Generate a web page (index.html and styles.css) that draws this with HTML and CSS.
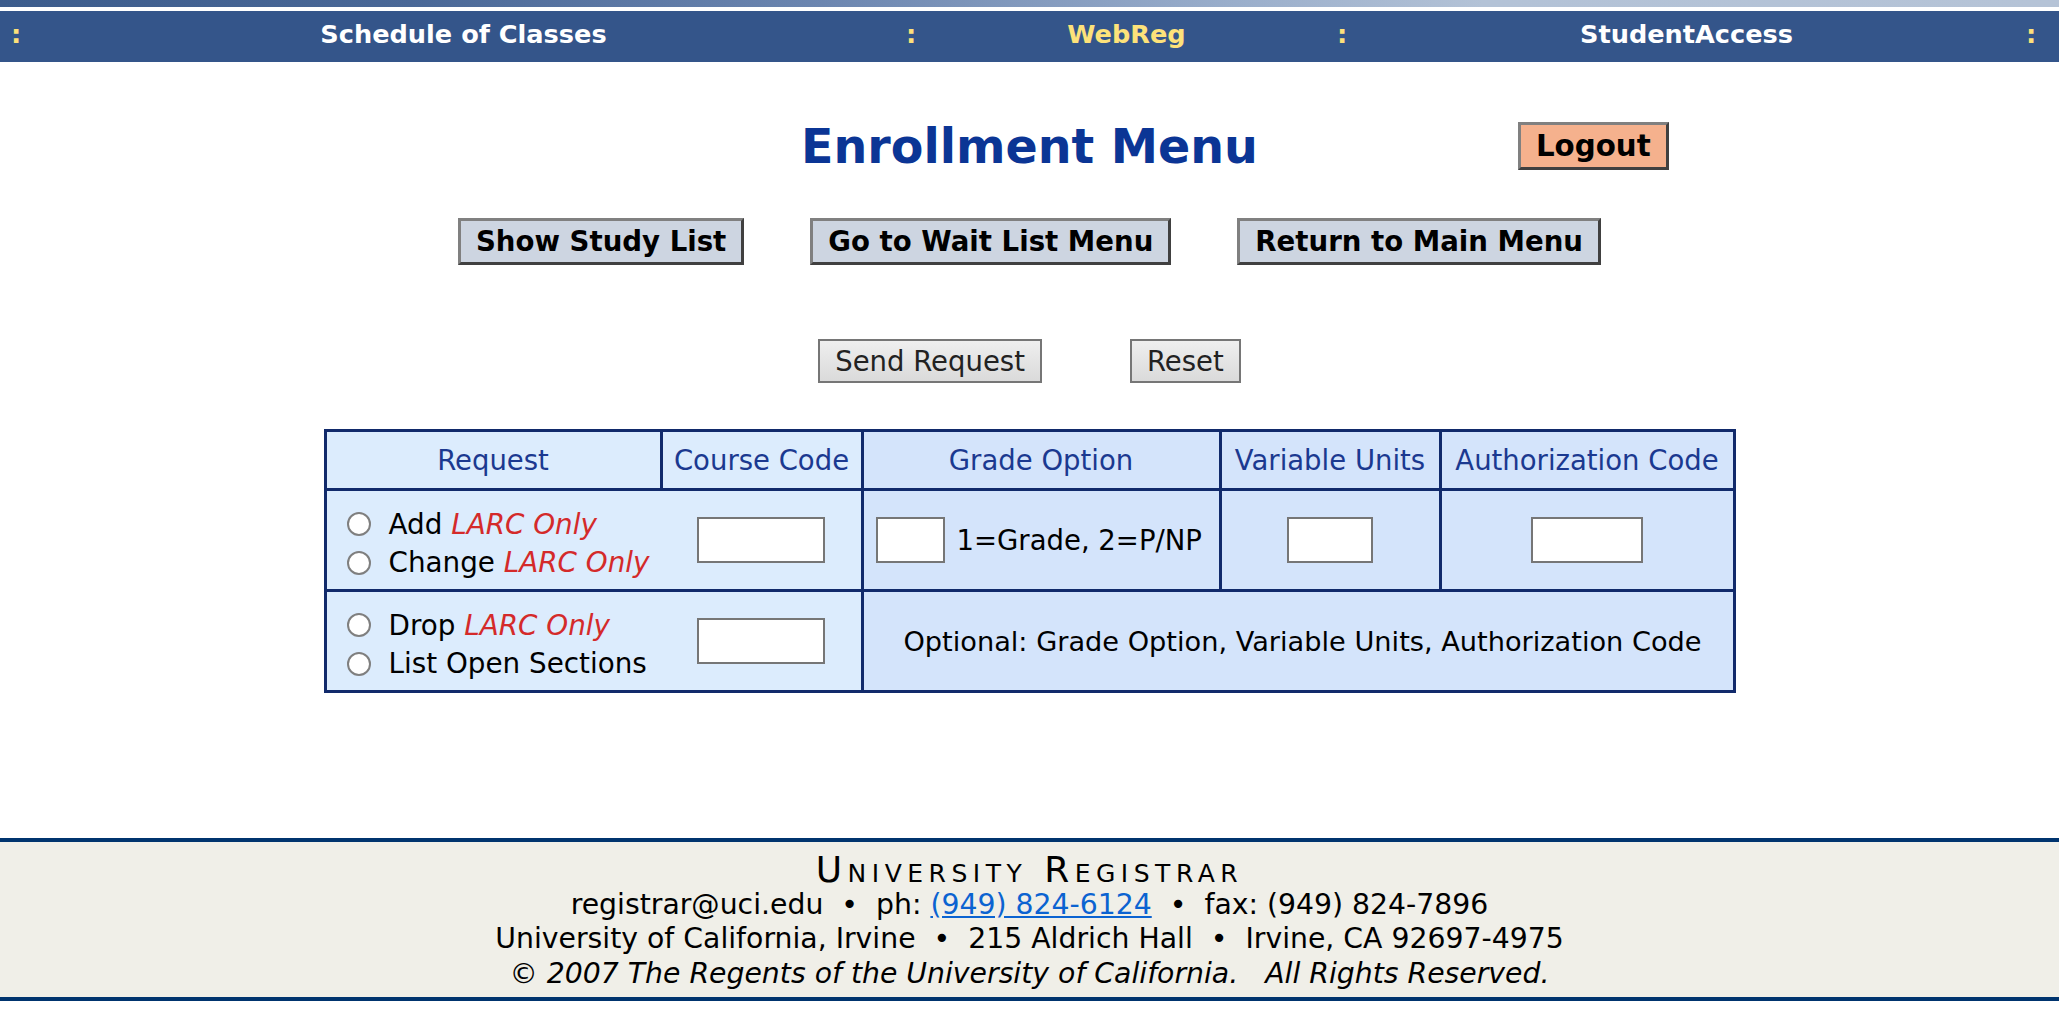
FILE: index.html
```html
<!DOCTYPE html>
<html lang="en">
<head>
<meta charset="utf-8">
<title>Enrollment Menu</title>
<link rel="stylesheet" href="styles.css">
</head>
<body>
<div class="banner"></div>
<nav class="nav">
  <span class="sep">:</span>
  <a class="nav-link" href="#">Schedule of Classes</a>
  <span class="sep">:</span>
  <a class="nav-link current" href="#">WebReg</a>
  <span class="sep">:</span>
  <a class="nav-link" href="#">StudentAccess</a>
  <span class="sep">:</span>
</nav>

<main class="main">
  <div class="title-row">
    <div></div>
    <h1 class="title">Enrollment Menu</h1>
    <div class="logout-cell"><button class="btn-bold btn-logout" type="button">Logout</button></div>
  </div>

  <div class="menu-buttons">
    <button class="btn-bold" type="button">Show Study List</button>
    <button class="btn-bold" type="button">Go to Wait List Menu</button>
    <button class="btn-bold" type="button">Return to Main Menu</button>
  </div>

  <div class="form-buttons">
    <button class="btn-plain" type="button">Send Request</button>
    <button class="btn-plain" type="button">Reset</button>
  </div>

  <table class="enroll">
    <colgroup>
      <col class="c-req"><col class="c-code"><col class="c-grade"><col class="c-units"><col class="c-auth">
    </colgroup>
    <thead>
      <tr>
        <th class="light">Request</th>
        <th class="light">Course Code</th>
        <th>Grade Option</th>
        <th>Variable Units</th>
        <th>Authorization Code</th>
      </tr>
    </thead>
    <tbody>
      <tr class="row">
        <td class="light req">
          <label class="opt"><input class="radio" type="radio" name="req"><span>Add <em class="larc">LARC Only</em></span></label>
          <label class="opt"><input class="radio" type="radio" name="req"><span>Change <em class="larc">LARC Only</em></span></label>
        </td>
        <td class="light code"><input class="field f-code" type="text"></td>
        <td class="grade"><div class="grade-inner"><input class="field f-grade" type="text"><span>1=Grade, 2=P/NP</span></div></td>
        <td class="center"><input class="field f-units" type="text"></td>
        <td class="center"><input class="field f-auth" type="text"></td>
      </tr>
      <tr class="row">
        <td class="light req">
          <label class="opt"><input class="radio" type="radio" name="req"><span>Drop <em class="larc">LARC Only</em></span></label>
          <label class="opt"><input class="radio" type="radio" name="req"><span>List Open Sections</span></label>
        </td>
        <td class="light code"><input class="field f-code" type="text"></td>
        <td class="center optional" colspan="3">Optional: Grade Option, Variable Units, Authorization Code</td>
      </tr>
    </tbody>
  </table>
</main>

<footer class="footer">
  <div class="f-title">University Registrar</div>
  <div>registrar@uci.edu &nbsp;•&nbsp; ph: <a class="f-link" href="#">(949) 824-6124</a> &nbsp;•&nbsp; fax: (949) 824-7896</div>
  <div>University of California, Irvine &nbsp;•&nbsp; 215 Aldrich Hall &nbsp;•&nbsp; Irvine, CA 92697-4975</div>
  <div class="f-copy">© 2007 The Regents of the University of California. &nbsp; All Rights Reserved.</div>
</footer>
</body>
</html>
```

FILE: styles.css
```css
html, body {
  margin: 0;
  padding: 0;
  background: #ffffff;
}
body {
  font-family: "DejaVu Sans", Verdana, sans-serif;
  font-size: 27.5px;
  color: #000;
}

.banner {
  height: 7px;
  background: linear-gradient(to right, #3c5c8c 0%, #4a6897 20%, #6c86b0 40%, #9aaecb 60%, #b3c2d6 72%, #b5c3d6 100%);
}
.nav {
  margin-top: 4px;
  height: 51px;
  box-sizing: border-box;
  padding-bottom: 5px;
  background: #34558a;
  display: grid;
  grid-template-columns: 32px 863fr 32px 399fr 32px 657fr 32px;
  padding-right: 12px;
  align-items: center;
}
.sep {
  color: #fde07a;
  font-weight: bold;
  font-size: 25.6px;
  text-align: center;
}
.nav-link {
  color: #ffffff;
  font-weight: bold;
  font-size: 25.6px;
  text-align: center;
  text-decoration: none;
}
.nav-link.current {
  color: #fde27a;
}

.main {
  display: flex;
  flex-direction: column;
  align-items: center;
}

.title-row {
  margin-top: 60px;
  width: 100%;
  display: grid;
  grid-template-columns: 1fr auto 1fr;
  align-items: center;
  height: 47px;
}
.title {
  margin: 0;
  font-size: 47.5px;
  line-height: 47px;
  color: #0b3595;
  font-weight: bold;
}
.logout-cell {
  padding-left: 260px;
}

.btn-bold {
  font-family: "DejaVu Sans", Verdana, sans-serif;
  font-size: 27.6px;
  font-weight: bold;
  line-height: 33px;
  color: #000;
  background: #cdd5e1;
  border: 3px solid;
  border-color: #808080 #404040 #404040 #808080;
  padding: 4px 15px 4px 15px;
  height: 47px;
  margin: 0;
}
.btn-logout {
  background: #f5b18d;
  font-size: 29.3px;
  height: 48px;
}

.menu-buttons {
  margin-top: 49px;
  display: flex;
  gap: 66px;
}

.form-buttons {
  margin-top: 74px;
  display: flex;
  gap: 88px;
}
.btn-plain {
  font-family: "DejaVu Sans", Verdana, sans-serif;
  font-size: 27.5px;
  line-height: 32px;
  color: #222;
  height: 44px;
  padding: 4px 15px;
  border: 2px solid #767676;
  background: linear-gradient(#efefef, #dadada);
  margin: 0;
}

.enroll {
  margin-top: 46px;
  width: 1409px;
  border-collapse: collapse;
  border: 3px solid #112a6b;
  table-layout: fixed;
}
.c-req { width: 336px; }
.c-code { width: 201px; }
.c-grade { width: 358px; }
.c-units { width: 220px; }
.c-auth { width: 294px; }

.enroll th, .enroll td {
  border: 3px solid #112a6b;
  background: #d4e4fb;
  padding: 0;
}
.enroll th {
  height: 56px;
  font-weight: normal;
  color: #1b3990;
  text-align: center;
  font-size: 27.5px;
  white-space: nowrap;
}
.enroll .light {
  background: #dcecfd;
}
.row td {
  height: 98px;
}
.enroll td.req {
  border-right: none;
  padding: 7px 0 0 20px;
  height: 91px;
  font-size: 27.8px;
}
.enroll td.code {
  border-left: none;
  text-align: center;
}
.center {
  text-align: center;
}
.enroll td.optional {
  font-size: 27.2px;
  padding-left: 9px;
}
.opt {
  display: flex;
  align-items: center;
  gap: 18px;
  height: 38.5px;
  white-space: nowrap;
}
.radio {
  appearance: none;
  -webkit-appearance: none;
  width: 24px;
  height: 24px;
  margin: 0;
  border: 2px solid #7f7f7f;
  border-radius: 50%;
  background: #fff;
  flex: none;
}
.larc {
  color: #d42a2a;
}
.field {
  box-sizing: border-box;
  height: 46px;
  border: 2px solid #767676;
  background: #fff;
  margin: 0;
  vertical-align: middle;
}
.f-code { width: 128px; }
.f-grade { width: 69px; }
.f-units { width: 86px; }
.f-auth { width: 112px; }
.grade-inner {
  display: flex;
  align-items: center;
  gap: 12px;
  padding-left: 12px;
  white-space: nowrap;
}

.footer {
  margin-top: 145px;
  border-top: 4px solid #00346e;
  border-bottom: 4px solid #00346e;
  background: #f0efe8;
  text-align: center;
  padding: 11px 0 5px;
  line-height: 34.7px;
  font-size: 28.3px;
}
.f-title {
  font-variant: small-caps;
  font-size: 36px;
  letter-spacing: 5.5px;
}
.f-link {
  color: #0b63d1;
}
.f-copy {
  font-style: italic;
}
```
